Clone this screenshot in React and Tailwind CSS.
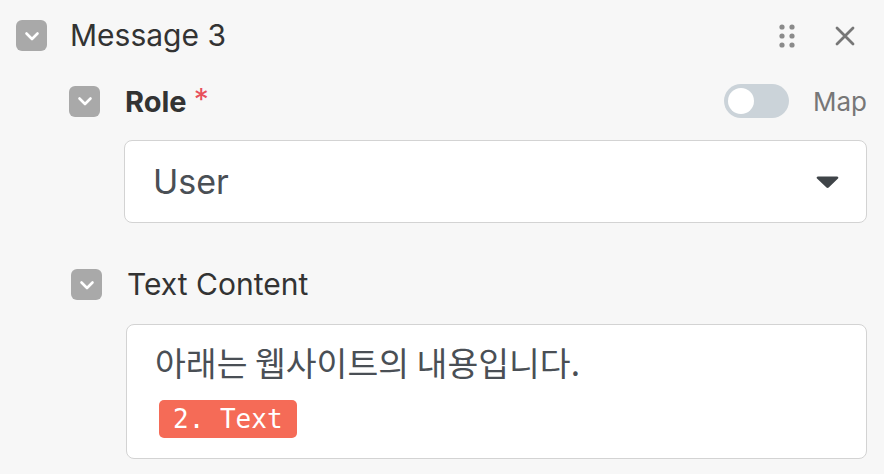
function Check({ className = "" }) {
  return (
    <div className={`w-[31px] h-[31px] rounded-[6px] bg-[#a9a9a9] flex items-center justify-center shrink-0 ${className}`}>
      <svg width="24" height="24" viewBox="0 0 24 24" fill="none" stroke="white" strokeWidth="2.6" strokeLinecap="round" strokeLinejoin="round">
        <path d="M6.5 9.5l5.5 5.5 5.5-5.5" />
      </svg>
    </div>
  );
}

function DragDots() {
  return (
    <svg width="16" height="24" viewBox="0 0 16 24" fill="#8a8a8a">
      <circle cx="3" cy="3" r="2.6" />
      <circle cx="13" cy="3" r="2.6" />
      <circle cx="3" cy="12" r="2.6" />
      <circle cx="13" cy="12" r="2.6" />
      <circle cx="3" cy="21" r="2.6" />
      <circle cx="13" cy="21" r="2.6" />
    </svg>
  );
}

export default function App() {
  return (
    <div className="w-[884px] h-[474px] bg-[#f7f7f7] overflow-hidden font-['Inter','Noto_Sans_CJK_KR',sans-serif] text-[#333]">
      {/* header */}
      <div className="flex items-center pl-4 pr-[29px] pt-5">
        <Check />
        <span className="ml-[23px] text-[30px] leading-[31px] text-[#333]">Message 3</span>
        <div className="ml-auto flex items-center">
          <DragDots />
          <svg className="ml-[40px]" width="20" height="20" viewBox="0 0 20 20" fill="none" stroke="#777" strokeWidth="2.8" strokeLinecap="round">
            <path d="M2 2l16 16M18 2L2 18" />
          </svg>
        </div>
      </div>

      {/* role */}
      <div className="flex items-center pl-[69px] pr-[17px] mt-[33px]">
        <Check />
        <span className="ml-[25px] text-[29px] leading-[31px] font-bold text-[#333]">Role</span>
        <span className="ml-[7px] text-[30px] leading-[31px] text-[#e8505b] -mt-[4px]">*</span>
        <div className="ml-auto flex items-center">
          <div className="w-[65px] h-[34px] rounded-full bg-[#cbd3d9] flex items-center px-[4px]">
            <div className="w-[26px] h-[26px] rounded-full bg-white" />
          </div>
          <span className="ml-[24px] text-[26px] leading-[31px] text-[#777]">Map</span>
        </div>
      </div>

      <div className="ml-[124px] mr-[17px] mt-[22px] h-[83px] bg-white border border-[#d3d3d3] rounded-[8px] flex items-center pl-[28px] pr-[27px]">
        <span className="text-[34px] text-[#4a4f55]">User</span>
        <svg className="ml-auto" width="23" height="14" viewBox="0 0 23 14">
          <path d="M2 1.5h19c1.2 0 1.8 1.3 1 2.1l-9.3 9c-.6.6-1.6.6-2.2 0L1 3.6c-.8-.8-.2-2.1 1-2.1z" fill="#3f4448" />
        </svg>
      </div>

      {/* text content */}
      <div className="flex items-center pl-[71px] mt-[46px]">
        <Check />
        <span className="ml-[25px] text-[30px] leading-[31px] text-[#333]">Text Content</span>
      </div>

      <div className="ml-[126px] mr-[17px] mt-[24px] h-[135px] bg-white border border-[#d3d3d3] rounded-[8px] pl-[28px] pt-[16px]">
        <div className="text-[33.5px] leading-[42px] text-[#4a4f55] font-['Noto_Sans_CJK_KR',sans-serif]">아래는 웹사이트의 내용입니다.</div>
        <div className="mt-[17px] ml-[4px] inline-flex items-center h-[38px] px-[14px] rounded-[5px] bg-[#f56b57] text-white text-[26px] font-['DejaVu_Sans_Mono',monospace]">
          2. Text
        </div>
      </div>
    </div>
  );
}
